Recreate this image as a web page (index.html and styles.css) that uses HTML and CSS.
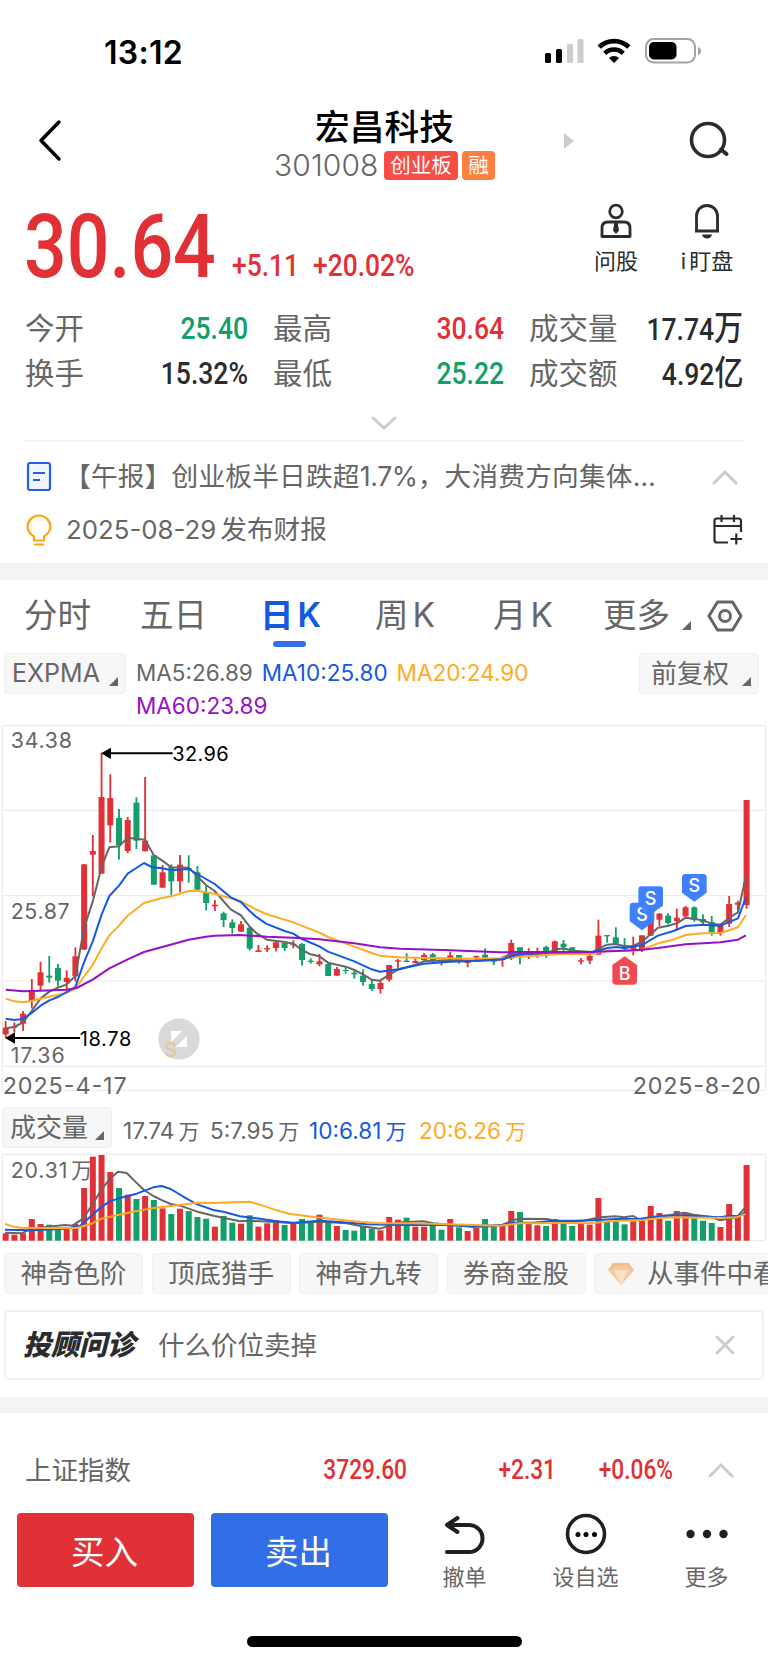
FILE: index.html
```html
<!DOCTYPE html>
<html lang="zh-CN">
  <head>
    <meta charset="utf-8" />
    <title>宏昌科技 301008</title>
    <meta name="viewport" content="width=device-width, initial-scale=1" />
    <link rel="stylesheet" href="styles.css">
  </head>
  <body>
    <div class="status-bar">
      <span class="time">13:12</span>
      <svg class="status-icons" width="160" height="30" viewBox="0 0 160 30">
        <rect x="1" y="17" width="6" height="10" rx="1.5" />
        <rect x="12" y="13" width="6" height="14" rx="1.5" />
        <rect x="23" y="8" width="6" height="19" rx="1.5" fill="#ccc" />
        <rect x="33.5" y="3" width="6" height="24" rx="1.5" fill="#ccc" />
        <path d="M55.2 11.2a21 21 0 0 1 29.6 0M60.8 17.3a13 13 0 0 1 18.4 0" fill="none" stroke="#000" stroke-width="4.6" />
        <path d="M70 27l-5-5a7.2 7.2 0 0 1 10 0z" />
        <rect x="102" y="3" width="49" height="23.5" rx="7.5" fill="none" stroke="#a3a3a3" stroke-width="2" />
        <rect x="105" y="6" width="27.5" height="17.5" rx="5" />
        <path d="M154 11q3 1 3 4t-3 4z" fill="#a3a3a3" />
      </svg>
    </div>

    <header class="header">
      <svg class="back" width="26" height="44" viewBox="0 0 26 44">
        <path d="M22 4L4 22.500L22 41" fill="none" stroke="#000" stroke-width="3.5" stroke-linecap="round" stroke-linejoin="round" />
      </svg>
      <div class="title">
        <h1>宏昌科技</h1>
        <div class="code">
          <span class="code-num">301008</span>
          <span class="tag tag-board">创业板</span>
          <span class="tag tag-margin">融</span>
        </div>
      </div>
      <span class="next"></span>
      <svg class="search" width="44" height="44" viewBox="0 0 44 44">
        <circle cx="21" cy="22" r="16.5" fill="none" stroke="#2a2c2e" stroke-width="3.6" />
        <path d="M34 31.500l5.500 4.500" stroke="#2a2c2e" stroke-width="4" stroke-linecap="round" />
      </svg>
    </header>

    <section class="quote">
      <div class="price-row">
        <span class="price">30.64</span>
        <span class="change change-abs">+5.11</span>
        <span class="change change-pct">+20.02%</span>
      </div>
      <div class="tool">
        <svg width="34" height="36" viewBox="0 0 34 36" fill="none" stroke="#2a2c2e" stroke-width="2.8">
          <circle cx="17" cy="8.500" r="6.3" />
          <path d="M3 33.500V25q0-6 6-6h16q6 0 6 6v8.500z" stroke-linejoin="round" />
          <path d="M15.500 19h3l1.500 8.500-3 3.500-3-3.500z" fill="#2a2c2e" stroke="none" />
        </svg>
        <span>问股</span>
      </div>
      <div class="tool tool-watch">
        <svg width="34" height="36" viewBox="0 0 34 36" fill="none" stroke="#2a2c2e" stroke-width="2.8">
          <path d="M6.500 28V13a10.500 10.500 0 0 1 21 0v15zM5 28h24" />
          <path d="M12 31.500h10q-1 4-5 4t-5-4z" fill="#2a2c2e" stroke="none" />
        </svg>
        <span><em>i</em>盯盘</span>
      </div>
    </section>

    <section class="stats">
      <div class="stat"><span>今开</span><b class="down">25.40</b></div>
      <div class="stat"><span>最高</span><b class="up">30.64</b></div>
      <div class="stat"><span>成交量</span><b>17.74<i>万</i></b></div>
      <div class="stat"><span>换手</span><b>15.32%</b></div>
      <div class="stat"><span>最低</span><b class="down">25.22</b></div>
      <div class="stat"><span>成交额</span><b>4.92<i>亿</i></b></div>
    </section>
    <div class="expand">
      <svg width="26" height="14" viewBox="0 0 26 14"><path d="M2 2l11 10L24 2" class="chevron" /></svg>
    </div>

    <section class="news">
      <div class="news-row">
        <svg class="news-icon" width="26" height="32" viewBox="0 0 26 32" fill="none" stroke="#2161e8" stroke-width="2.2">
          <rect x="2" y="2" width="22" height="27" rx="2" fill="#f0f5ff" />
          <path d="M7 12h12M7 19h7" />
        </svg>
        <span class="headline">【午报】创业板半日跌超<em>1.7%</em>，大消费方向集体…</span>
        <svg class="news-end" width="26" height="16" viewBox="0 0 26 16"><path d="M2 14L13 3l11 11" class="chevron" /></svg>
      </div>
      <div class="news-row">
        <svg class="news-icon" width="26" height="32" viewBox="0 0 26 32" fill="none" stroke="#ffa60f" stroke-width="2.2">
          <path d="M8 26.500v-4C3.500 19.500 1.500 17 1.500 13a11.500 11.500 0 0 1 23 0c0 4-2 6.500-6.500 9.500v4zM8 30.500h10" />
        </svg>
        <span class="report"><em>2025-08-29</em>发布财报</span>
        <svg class="news-end" width="30" height="32" viewBox="0 0 30 32" fill="none" stroke="#2a2c2e" stroke-width="2.2">
          <path d="M15 28.500H4q-2.500 0-2.500-2.500V7Q1.500 4.500 4 4.500h21.500q2.500 0 2.500 2.500v11M1.500 12H28M8.500 1v7M21 1v7M17.500 25H29M23.300 19.500v11" />
        </svg>
      </div>
    </section>

    <div class="band"></div>

    <nav class="tabs">
      <span class="tab">分时</span>
      <span class="tab">五日</span>
      <span class="tab active">日<em>K</em></span>
      <span class="tab">周<em>K</em></span>
      <span class="tab">月<em>K</em></span>
      <span class="tab tab-more">更多<i class="corner"></i></span>
      <svg class="settings" width="36" height="34" viewBox="0 0 36 34" fill="none" stroke="#666" stroke-width="3">
        <path d="M10.500 3h15L34 17l-8.500 14h-15L2 17z" stroke-linejoin="round" />
        <circle cx="18" cy="17" r="5.5" />
      </svg>
    </nav>

    <div class="indicators">
      <span class="select select-expma">EXPMA<i class="corner"></i></span>
      <div class="ma">
        <span class="ma5">MA5:26.89</span>
        <span class="ma10">MA10:25.80</span>
        <span class="ma20">MA20:24.90</span>
        <span class="ma60">MA60:23.89</span>
      </div>
      <span class="select select-adjust">前复权<i class="corner"></i></span>
    </div>

    <!-- plot units are thirds of a pixel -->
    <svg class="kline" width="768" height="385" viewBox="0 0 2304 1155">
      <path class="grid" d="M7 31H2297M7 286H2297M7 542H2297M7 798H2297M7 1054H2297M7 1126H2297M7 31V1126M2297 31V1126" />
      <g class="axis">
        <text x="32" y="99" textLength="184">34.38</text>
        <text x="32" y="611" textLength="177">25.87</text>
        <text x="32" y="1043" textLength="162">17.36</text>
      </g>
      <g class="date">
        <text x="8" y="1136" textLength="372">2025-4-17</text>
        <text x="1898" y="1136" textLength="384">2025-8-20</text>
      </g>
      <g id="candles"></g>
      <polyline class="l-gray" points="17,940 43,936 69,922 95,888 122,850 148,830 174,818 200,808 226,784 252,640 278,560 305,455 328,397 357,394 383,368 435,374 461,420 487,437 514,457 566,458 592,484 618,510 644,528 692,583 723,601 749,635 770,655 801,674 854,681 880,686 906,705 932,718 958,724 984,743 1037,755 1063,765 1089,778 1115,794 1140,797 1168,779 1194,764 1246,749 1272,739 1350,735 1430,738 1500,734 1533,715 1560,720 1640,715 1665,704 1690,700 1717,707 1778,711 1796,700 1822,689 1847,687 1874,694 1900,693 1926,680 1974,638 2005,632 2031,625 2057,608 2083,612 2109,616 2135,626 2161,629 2188,608 2214,592 2238,482" />
      <polyline class="l-orange" points="17,851 43,859 69,862 95,858 122,851 148,845 200,834 226,820 278,750 305,700 328,661 357,632 383,602 432,564 487,549 514,544 566,528 592,527 644,536 692,550 723,560 768,583 798,597 880,622 958,653 984,666 1063,695 1115,714 1140,722 1194,727 1246,728 1300,729 1420,731 1506,730 1560,725 1690,716 1770,718 1830,706 1880,709 1926,704 1974,685 2020,674 2057,660 2109,655 2161,654 2188,646 2214,636 2238,600" />
      <polyline class="l-blue" points="17,911 43,915 69,912 95,894 122,872 148,856 174,846 226,816 252,742 278,680 305,598 328,543 357,512 383,476 409,459 432,444 457,457 487,460 514,466 566,462 618,492 644,507 692,547 723,561 749,588 768,605 798,626 854,648 880,656 906,672 958,694 984,710 1063,739 1115,763 1140,770 1194,763 1272,746 1350,740 1400,739 1506,733 1560,717 1640,713 1778,712 1822,699 1850,696 1874,699 1926,690 1974,662 2020,648 2057,633 2109,629 2161,632 2214,610 2238,546" />
      <polyline class="l-purple" points="17,824 69,829 122,827 200,824 230,819 278,794 328,760 383,733 432,711 487,696 566,674 618,665 644,662 720,660 801,665 880,668 958,673 1063,685 1140,697 1200,701 1330,705 1500,712 1560,711 1680,711 1770,711 1850,708 1926,704 1974,699 2057,688 2161,682 2214,674 2238,661" />
      <g class="extreme">
        <path d="M330 115H518M40 969H240" />
        <path d="M303 115l30-17v34zM15 969l30-17v34z" />
        <text x="517" y="138" textLength="169">32.96</text>
        <text x="239" y="992" textLength="155">18.78</text>
      </g>
      <circle cx="537" cy="972" r="62" fill="#d9d9d9" />
      <path d="M513 948h34l-34 34zM561 962v34h-34z" fill="#fff" />
      <text class="spot" x="492" y="1027">S</text>
      <g class="marks">
        <path class="sell" d="M1899 563h54q10 0 10 10v46l-37 27l-37-27v-46q0-10 10-10z" />
        <text x="1926" y="617">S</text>
        <path class="sell" d="M1925 514h54q10 0 10 10v48l-37 26l-37-26v-48q0-10 10-10z" />
        <text x="1952" y="570">S</text>
        <path class="sell" d="M2056 477h54q10 0 10 10v46l-37 27l-37-27v-46q0-10 10-10z" />
        <text x="2083" y="531">S</text>
        <path class="buy" d="M1874 724l37 26v49q0 10-10 10h-54q-10 0-10-10v-49z" />
        <text x="1874" y="796">B</text>
      </g>
    </svg>

    <div class="volume-head">
      <span class="select select-volume">成交量<i class="corner"></i></span>
      <span class="vol v-now">17.74<i>万</i></span>
      <span class="vol v5">5:7.95<i>万</i></span>
      <span class="vol v10">10:6.81<i>万</i></span>
      <span class="vol v20">20:6.26<i>万</i></span>
    </div>
    <svg class="volume" width="768" height="92" viewBox="0 150 2304 276">
      <path class="grid" d="M7 163H2297V422H7z" />
      <text class="axis" x="32" y="234" textLength="170">20.31</text>
      <text class="axis" x="214" y="234">万</text>
      <g id="volumes"></g>
      <polyline class="l-gray" points="15,398 65,400 95,386 130,382 165,378 195,375 218,377 250,355 278,312 305,268 330,236 354,215 380,219 405,244 432,270 460,288 487,301 512,312 540,317 592,335 644,348 720,364 749,362 830,366 880,370 960,365 1040,370 1085,379 1140,386 1170,377 1204,367 1270,364 1300,370 1420,381 1470,379 1510,374 1536,361 1560,356 1640,357 1665,362 1750,362 1800,352 1845,349 1872,352 1900,348 1916,357 1960,350 2010,345 2054,338 2080,344 2130,350 2160,361 2210,352 2236,322" />
      <polyline class="l-blue" points="15,389 95,391 200,386 240,378 280,342 305,320 330,304 357,295 410,281 460,262 485,258 512,267 560,296 592,313 640,330 670,335 720,349 770,355 830,364 880,368 960,362 1030,367 1100,373 1200,375 1300,374 1420,378 1500,376 1540,368 1600,368 1660,362 1700,364 1780,361 1850,357 1930,356 1970,350 2030,346 2160,352 2190,347 2215,349 2236,337" />
      <polyline class="l-orange" points="15,372 40,380 70,384 230,384 270,373 305,356 357,344 410,333 460,324 540,315 592,308 640,309 700,307 749,305 780,314 830,331 870,342 960,353 1085,366 1140,370 1240,370 1500,377 1560,370 1700,369 1770,370 1830,364 1930,360 1980,354 2030,352 2160,354 2210,352 2236,342" />
    </svg>

    <div class="chips">
      <span class="chip">神奇色阶</span>
      <span class="chip">顶底猎手</span>
      <span class="chip">神奇九转</span>
      <span class="chip">券商金股</span>
      <span class="chip chip-wide">
        <svg width="26" height="22" viewBox="0 0 26 22">
          <path d="M5 0h16l5 7-13 15L0 7z" fill="#f3bf8b" />
          <path d="M0 7h26L13 22z" fill="#f5cda5" />
          <path d="M6 7h14l-7 15z" fill="#f9dfc4" />
          <path d="M7 2.500h12l2 4.500H5z" fill="#f7c898" />
        </svg>
        从事件中看
      </span>
    </div>

    <div class="advisor">
      <span class="advisor-logo">投顾问诊</span>
      <span class="advisor-text">什么价位卖掉</span>
      <svg width="20" height="20" viewBox="0 0 20 20"><path d="M2 2l16 16M18 2L2 18" class="chevron" /></svg>
    </div>

    <div class="band band-low"></div>

    <div class="index-row">
      <span class="index-name">上证指数</span>
      <b class="index-value">3729.60</b>
      <b class="index-diff">+2.31</b>
      <b class="index-pct">+0.06%</b>
      <svg width="26" height="16" viewBox="0 0 26 16"><path d="M2 14L13 3l11 11" class="chevron" /></svg>
    </div>

    <footer class="actions">
      <button class="btn buy-btn">买入</button>
      <button class="btn sell-btn">卖出</button>
      <div class="action">
        <svg width="44" height="44" viewBox="0 0 44 44" fill="none" stroke="#1f2022" stroke-width="4" stroke-linecap="round" stroke-linejoin="round">
          <path d="M14.500 5L4 12l10.500 7M5 12h21a13.500 13.500 0 0 1 0 27H4" />
        </svg>
        <span>撤单</span>
      </div>
      <div class="action">
        <svg width="44" height="44" viewBox="0 0 44 44">
          <circle cx="22" cy="21" r="18.5" fill="none" stroke="#1f2022" stroke-width="3.6" />
          <circle cx="14" cy="21.500" r="2.5" /><circle cx="22" cy="21.500" r="2.5" /><circle cx="30.500" cy="21.500" r="2.5" />
        </svg>
        <span>设自选</span>
      </div>
      <div class="action">
        <svg width="44" height="44" viewBox="0 0 44 44" fill="#1f2022">
          <circle cx="5.500" cy="21" r="4.2" /><circle cx="22" cy="21" r="4.2" /><circle cx="38.500" cy="21" r="4.2" />
        </svg>
        <span>更多</span>
      </div>
    </footer>
    <div class="home-bar"></div>
    <script src="chart.js"></script>
  </body>
</html>
```
FILE: styles.css
```css
* {
  box-sizing: border-box;
}
body {
  margin: 0;
  width: 768px;
  height: 1663px;
  overflow: hidden;
  background: #fff;
  color: #666;
  font-family: Inter, "Noto Sans CJK SC", sans-serif;
  line-height: 1;
}
i,
em {
  font-style: normal;
}
svg {
  display: block;
  flex: none;
}
.chevron {
  fill: none;
  stroke: #ccc;
  stroke-width: 3;
  stroke-linecap: round;
}

.status-bar {
  height: 88px;
  padding: 36px 64px 0 104px;
  display: flex;
  justify-content: space-between;
}
.time {
  font-size: 32px;
  font-weight: 600;
  line-height: 34px;
  letter-spacing: 0.3px;
  color: #000;
}

.header {
  height: 108px;
  display: grid;
  grid-template-columns: 26px 1fr 10px 44px;
  padding: 0 37px;
}
.back {
  margin-top: 30px;
}
.title {
  width: 224px;
  margin-left: 211px;
  padding-top: 19px;
}
h1 {
  margin: 0 3px 0 0;
  font-size: 34.7px;
  line-height: 40px;
  font-weight: 500;
  color: #000;
  text-align: center;
}
.code {
  display: flex;
  margin-top: 4px;
}
.code-num {
  width: 110px;
  font-size: 30px;
  line-height: 29px;
  font-weight: 300;
  letter-spacing: 0.1px;
}
.tag {
  height: 29px;
  border-radius: 4px;
  color: #fff;
  font-size: 20.5px;
  line-height: 29px;
  text-align: center;
}
.tag-board {
  width: 74px;
  background: #f94c45;
}
.tag-margin {
  width: 33px;
  margin-left: 4px;
  background: #ff7f40;
}
.next {
  margin: 45px 0 0 -113px;
  width: 0;
  height: 0;
  border: 8px solid transparent;
  border-left: 10px solid #ccc;
  border-right: 0;
}
.search {
  margin-top: 30px;
}

.quote {
  height: 104px;
  display: flex;
}
.price-row {
  width: 567px;
  height: 86px;
  padding-left: 24px;
  display: flex;
  align-items: flex-end;
  color: #e13036;
  font-family: Roboto, sans-serif;
}
.price {
  width: 208px;
  margin-bottom: -10px;
  font-size: 89px;
  font-weight: 500;
  line-height: 90px;
  transform: scaleX(0.845);
  transform-origin: left;
}
.change {
  font-size: 30.5px;
  font-weight: 500;
  line-height: 32px;
  transform: scaleX(0.865);
  transform-origin: left;
}
.change-abs {
  width: 81px;
}
.tool {
  width: 98px;
  padding-top: 7px;
  display: flex;
  flex-direction: column;
  align-items: center;
  color: #2a2c2e;
  font-size: 22px;
}
.tool span {
  margin-top: 11px;
}
.tool-watch {
  width: 84px;
}
.tool-watch em {
  margin-right: 3px;
}

.stats {
  padding: 6px 25px 0;
  display: grid;
  grid-template-columns: 223px 231px 214px;
  column-gap: 25px;
  grid-auto-rows: 45px;
}
.stat {
  display: flex;
  justify-content: space-between;
  align-items: center;
  font-size: 29.5px;
  line-height: 45px;
}
.stat b {
  color: #2a2c2e;
  font-family: Roboto, "Noto Sans CJK SC", sans-serif;
  font-size: 31px;
  font-weight: 500;
  transform: scaleX(0.855);
  transform-origin: right;
}
.stat b i {
  font-size: 34px;
}
.stat .up {
  color: #e13036;
}
.stat .down {
  color: #129f69;
}

.expand {
  height: 46px;
  margin: 0 25px;
  padding-top: 20px;
  display: flex;
  justify-content: center;
  border-bottom: 2px solid #f3f3f3;
}

.news {
  height: 121px;
  padding: 8px 25px 0 26px;
}
.news-row {
  height: 53px;
  display: flex;
  align-items: center;
  font-size: 26.7px;
  white-space: nowrap;
}
.headline {
  margin-left: 12px;
  letter-spacing: 0.2px;
}
.headline em {
  letter-spacing: -0.4px;
}
.report {
  margin-left: 14px;
}
.report em {
  font-size: 25.8px;
  margin-right: 4px;
}
.news-end {
  margin-left: auto;
}
.news-row:first-child .news-end {
  margin-right: 5px;
}

.band {
  height: 17px;
  background: #f4f4f4;
}

.tabs {
  height: 72px;
  padding-left: 24px;
  display: flex;
  font-size: 33.5px;
  line-height: 71px;
}
.tab {
  width: 116px;
  position: relative;
  white-space: nowrap;
}
.tab:nth-child(2) {
  width: 120px;
}
.tab em {
  margin-left: 4px;
}
.tab:nth-child(3),
.tab:nth-child(4) {
  width: 115px;
}
.tab:nth-child(4) {
  width: 118px;
}
.tab:nth-child(5) {
  width: 110px;
}
.tab-more {
  width: 104px;
}
.active {
  color: #1459e4;
  font-weight: 600;
}
.active::after {
  content: "";
  position: absolute;
  left: 13px;
  top: 61px;
  width: 33px;
  height: 6px;
  border-radius: 3px;
  background: #326fe6;
}
.corner {
  display: inline-block;
  width: 0;
  height: 0;
  border-left: 9px solid transparent;
  border-bottom: 9px solid #666;
}
.tab-more .corner {
  margin-left: 12px;
  vertical-align: -3px;
}
.settings {
  margin-top: 19px;
}

.indicators {
  height: 68px;
  padding: 1px 9px 0 4px;
  display: flex;
  align-items: flex-start;
}
.select {
  height: 41px;
  display: flex;
  align-items: center;
  justify-content: space-between;
  padding: 0 7px;
  border: 1px solid #eee;
  border-radius: 4px;
  background: #f7f7f7;
  font-size: 26px;
  white-space: nowrap;
}
.select .corner {
  margin-top: 16px;
}
.select-expma {
  width: 122px;
  font-size: 25px;
}
.select-adjust {
  width: 120px;
  padding-left: 11px;
}
.select-volume {
  width: 110px;
}
.ma {
  width: 501px;
  padding: 3px 0 0 10px;
  margin-right: auto;
  display: flex;
  flex-wrap: wrap;
  column-gap: 9px;
  font-size: 22.5px;
  line-height: 33px;
}
.ma10,
.v10 {
  color: #1459e4;
}
.ma20,
.v20 {
  color: #ffaa22;
}
.ma60 {
  color: #9510c8;
}

.kline {
  margin-top: -5px;
}
.grid {
  fill: none;
  stroke: #e9e9e9;
  stroke-width: 3;
}
.axis {
  fill: #666;
  font-size: 64px;
}
.date {
  fill: #666;
  font-size: 70px;
}
.up-bar {
  fill: #e13036;
}
.down-bar {
  fill: #129f69;
}
polyline {
  fill: none;
  stroke-width: 6;
  stroke-linejoin: round;
}
.l-gray {
  stroke: #666;
}
.l-blue {
  stroke: #1459e4;
}
.l-orange {
  stroke: #ffaa22;
}
.l-purple {
  stroke: #9510c8;
}
.extreme {
  font-size: 60px;
  stroke-width: 6;
}
.extreme path {
  stroke: #000;
}
.extreme path + path {
  stroke: none;
}
.extreme text {
  fill: #000;
}
.spot {
  fill: #e5c490;
  font-size: 62px;
}
.marks text {
  fill: #fff;
  font-size: 54px;
  font-weight: 500;
  text-anchor: middle;
}
.sell {
  fill: #4080ff;
}
.buy {
  fill: #f04a50;
}

.volume-head {
  height: 51px;
  padding: 7px 0 0 2px;
  display: flex;
}
.vol {
  height: 41px;
  font-size: 22.6px;
  line-height: 47px;
}
.vol i {
  margin-left: 4px;
  font-size: 21px;
}
.v-now {
  width: 87px;
  margin-left: 11px;
}
.v5 {
  width: 99px;
}
.v10 {
  width: 110px;
}
.volume {
  margin-top: -1px;
}

.chips {
  height: 57px;
  padding: 11px 0 0 4px;
  display: flex;
  gap: 8.5px;
  overflow: hidden;
}
.chip {
  flex: none;
  width: 139px;
  height: 41px;
  border: 1px solid #f0f0f0;
  border-radius: 4px;
  background: #f7f7f7;
  font-size: 26.5px;
  line-height: 39px;
  text-align: center;
}
.chip-wide {
  width: 220px;
  display: flex;
  align-items: center;
  gap: 13px;
  padding-left: 13px;
  white-space: nowrap;
}

.advisor {
  height: 70px;
  margin: 11px 4px 0;
  padding: 0 27px 0 17px;
  display: flex;
  align-items: center;
  border: 2px solid #f0f0f0;
  border-radius: 5px;
}
.advisor-logo {
  width: 135px;
  font-size: 28px;
  font-weight: 900;
  font-style: italic;
  color: #2a2c2e;
}
.advisor-text {
  flex: 1;
  font-size: 26.5px;
}

.band-low {
  height: 16px;
  margin-top: 17px;
}

.index-row {
  height: 100px;
  padding: 14px 34px 0 25px;
  display: grid;
  grid-template-columns: 200px 182px 149px 117px 1fr;
  align-items: center;
  font-size: 26.5px;
}
.index-row b {
  color: #e13036;
  font-family: Roboto, sans-serif;
  font-size: 27px;
  font-weight: 500;
  transform: scaleX(0.84);
  transform-origin: right;
  text-align: right;
}
.index-row svg {
  justify-self: end;
}

.actions {
  height: 96px;
  padding-left: 17px;
  display: flex;
}
.btn {
  width: 177px;
  height: 74px;
  margin: 0 17px 0 0;
  padding: 0 2px 2px 0;
  border: 0;
  border-radius: 4px;
  color: #fff;
  font: 33.5px Inter, "Noto Sans CJK SC", sans-serif;
}
.sell-btn {
  margin-right: 16px;
}
.buy-btn {
  background: #e13036;
}
.sell-btn {
  background: #326fe6;
}
.action {
  width: 121px;
  display: flex;
  flex-direction: column;
  align-items: center;
  font-size: 22px;
}
.action span {
  margin-top: 9px;
}

.home-bar {
  width: 275px;
  height: 11px;
  margin: 27px 0 0 247px;
  border-radius: 6px;
  background: #000;
}
```
FILE: chart.js
```js
// [high, body top, body bottom, low, rising]
const candles = [
  [918, 938, 958, 968, 1], [922, 934, 938, 952, 1], [888, 896, 926, 948, 1], [792, 826, 858, 880, 1],
  [740, 772, 812, 826, 1], [723, 782, 788, 803, 0], [747, 759, 797, 815, 0], [766, 788, 801, 822, 1],
  [697, 724, 784, 800, 1], [448, 448, 704, 704, 1], [360, 408, 419, 544, 1], [114, 246, 476, 476, 1],
  [178, 249, 331, 383, 1], [282, 309, 391, 434, 0], [306, 315, 408, 414, 1], [247, 263, 377, 402, 0],
  [186, 377, 409, 409, 1], [421, 421, 509, 509, 0], [450, 472, 518, 518, 1], [448, 456, 499, 540, 0],
  [420, 449, 499, 532, 1], [421, 459, 463, 503, 0], [453, 472, 524, 524, 0], [512, 534, 564, 586, 0],
  [555, 569, 574, 588, 1], [590, 595, 615, 636, 0], [613, 622, 639, 656, 0], [618, 628, 650, 650, 1],
  [634, 638, 701, 706, 0], [690, 706, 711, 711, 1], [691, 699, 703, 711, 1], [679, 682, 699, 709, 1],
  [684, 684, 699, 708, 0], [676, 688, 691, 700, 1], [684, 687, 735, 752, 0], [730, 737, 741, 746, 0],
  [717, 739, 748, 754, 1], [745, 747, 783, 783, 0], [756, 762, 782, 782, 1], [757, 765, 768, 776, 0],
  [768, 773, 778, 791, 0], [763, 782, 801, 812, 0], [794, 807, 822, 828, 0], [798, 804, 822, 836, 1],
  [750, 750, 794, 800, 1], [732, 736, 740, 760, 1], [715, 737, 741, 741, 0], [730, 738, 744, 744, 1],
  [714, 720, 735, 740, 1], [714, 718, 735, 740, 0], [735, 738, 744, 752, 0], [711, 721, 729, 737, 1],
  [720, 720, 740, 746, 0], [738, 740, 744, 757, 1], [722, 723, 727, 741, 1], [700, 719, 728, 736, 0],
  [731, 736, 740, 750, 0], [724, 731, 735, 755, 1], [674, 684, 730, 735, 1], [697, 697, 725, 748, 0],
  [700, 716, 720, 732, 1], [698, 716, 719, 728, 1], [692, 696, 722, 728, 0], [677, 679, 708, 712, 1],
  [675, 686, 696, 708, 0], [697, 697, 714, 720, 0], [729, 736, 740, 748, 1], [718, 723, 737, 747, 1],
  [614, 662, 719, 719, 1], [660, 660, 664, 683, 0], [637, 667, 686, 690, 0], [669, 690, 702, 708, 0],
  [665, 694, 702, 721, 1], [661, 661, 706, 711, 1], [600, 610, 662, 662, 1], [594, 596, 614, 633, 1],
  [595, 602, 624, 628, 0], [581, 608, 618, 642, 1], [573, 577, 604, 608, 1], [574, 577, 614, 620, 0],
  [598, 612, 622, 628, 0], [603, 621, 652, 662, 0], [625, 628, 654, 662, 1], [543, 567, 626, 636, 1],
  [557, 563, 569, 590, 1], [255, 255, 570, 581, 1],
];
const volumes = [
  400, 404, 400, 357, 372, 374, 386, 388, 372, 264, 170, 165, 216, 264, 284, 297, 288, 300, 325, 342, 326, 333,
  351, 356, 380, 348, 368, 371, 346, 380, 370, 360, 375, 370, 357, 368, 344, 364, 378, 390, 392, 378, 386, 391,
  351, 359, 353, 380, 380, 376, 389, 357, 382, 393, 384, 357, 380, 374, 333, 336, 371, 376, 378, 357, 372, 378,
  370, 374, 294, 364, 365, 373, 364, 357, 318, 339, 362, 333, 338, 355, 362, 369, 381, 312, 347, 195,
];
const STEP = 26.15;
const center = (i) => 17 + i * STEP;

const bar = (parent, x, y, w, h, rising) => {
  const rect = document.createElementNS("http://www.w3.org/2000/svg", "rect");
  rect.setAttribute("x", x - w / 2);
  rect.setAttribute("y", y);
  rect.setAttribute("width", w);
  rect.setAttribute("height", h);
  rect.setAttribute("class", rising ? "up-bar" : "down-bar");
  parent.appendChild(rect);
};

const candleLayer = document.getElementById("candles");
candles.forEach(([high, top, bottom, low, rising], i) => {
  bar(candleLayer, center(i), high, 5.5, low - high, rising);
  bar(candleLayer, center(i), top, 18, bottom - top, rising);
});

const volumeLayer = document.getElementById("volumes");
volumes.forEach((top, i) => {
  bar(volumeLayer, center(i), top, 18, 422 - top, candles[i][4]);
});
```
